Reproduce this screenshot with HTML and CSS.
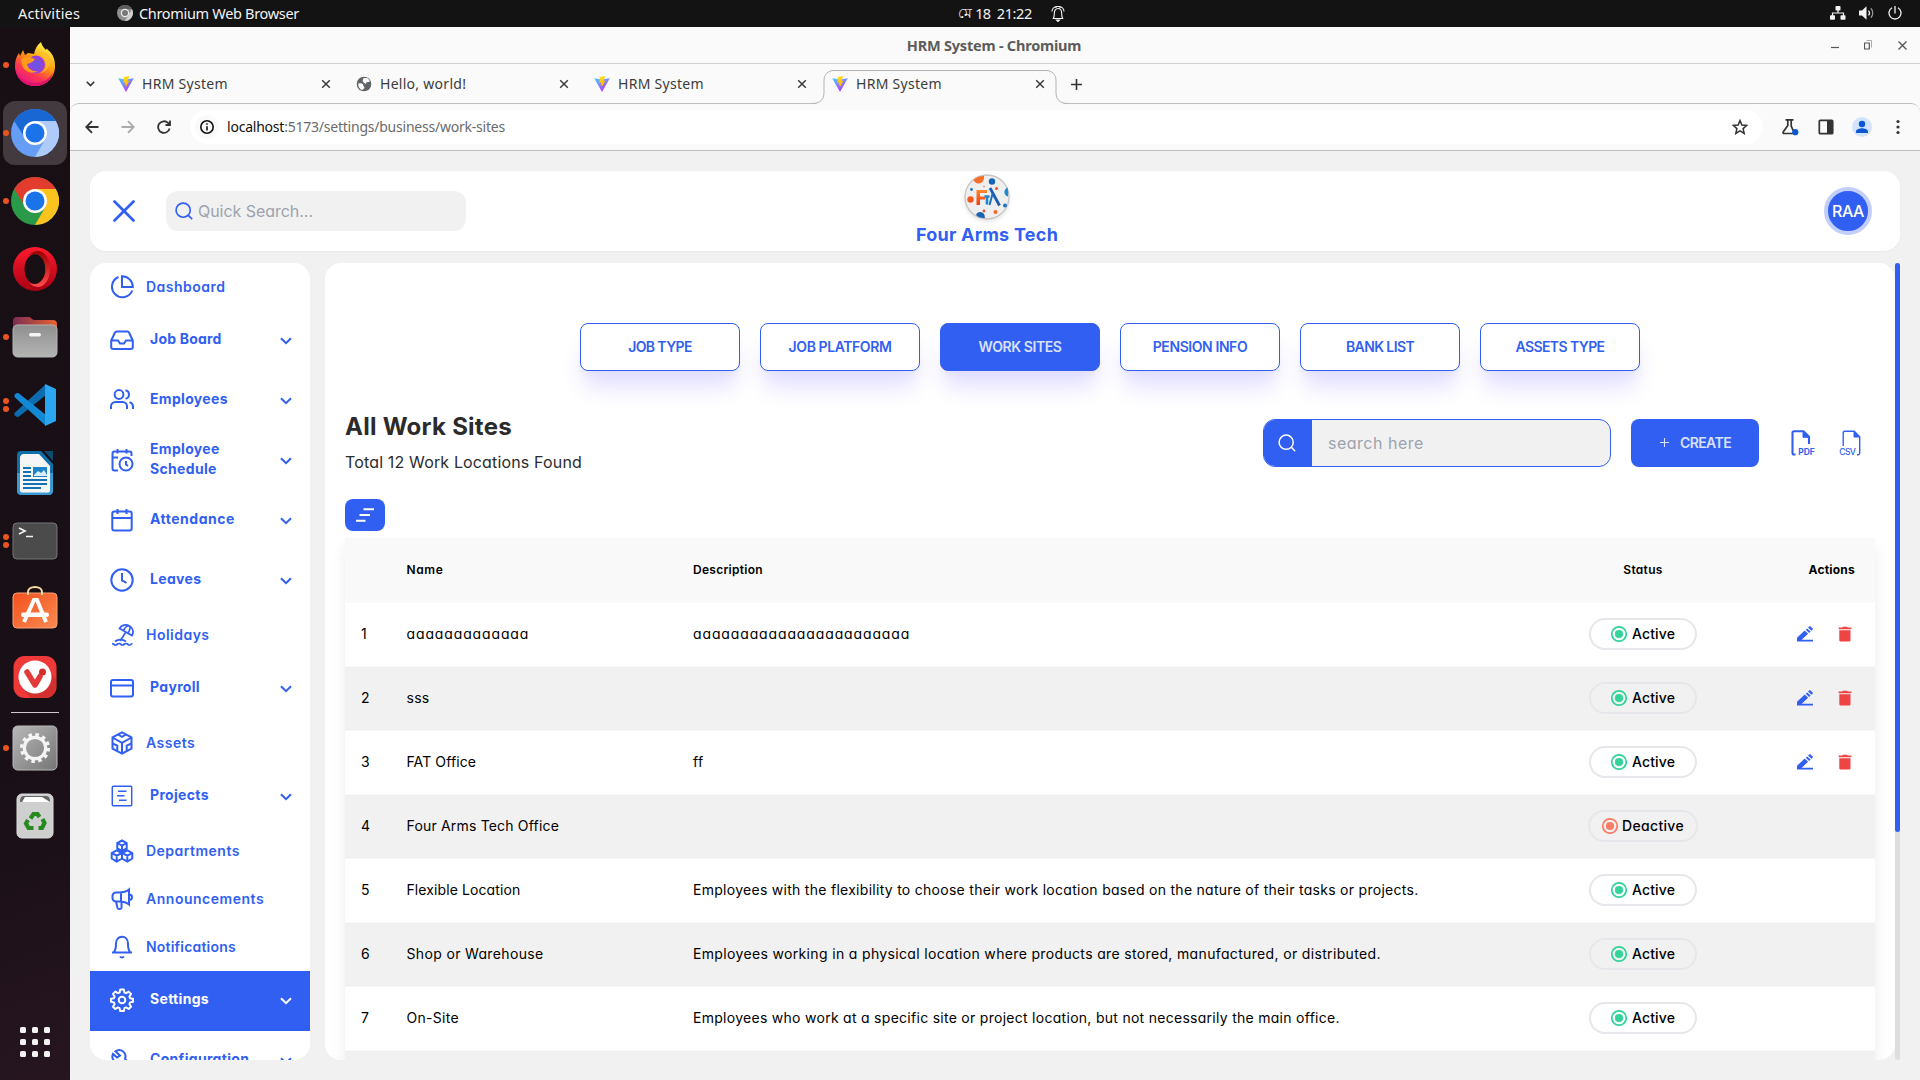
FILE: index.html
```html
<!DOCTYPE html>
<html lang="en">
<head>
<meta charset="utf-8">
<title>HRM System</title>
<link rel="stylesheet" href="styles.css">
</head>
<body>
<svg class="defs" aria-hidden="true">
  <defs>
    <linearGradient id="vA" x1="0" y1="0" x2="0.6" y2="1"><stop offset="0" stop-color="#41d1ff"/><stop offset="1" stop-color="#bd34fe"/></linearGradient>
    <linearGradient id="vB" x1="0.4" y1="0" x2="0.6" y2="1"><stop offset="0" stop-color="#ffdd20"/><stop offset="1" stop-color="#ffa800"/></linearGradient>
    <linearGradient id="ffBody" x1="0.8" y1="0.1" x2="0.3" y2="1"><stop offset="0" stop-color="#fff044"/><stop offset=".4" stop-color="#ff980e"/><stop offset=".7" stop-color="#ff3750"/><stop offset="1" stop-color="#e3158b"/></linearGradient>
    <radialGradient id="ffCore"><stop offset="0" stop-color="#5d5bea"/><stop offset="1" stop-color="#a13bd6"/></radialGradient>
    <linearGradient id="opA" x1="0" y1="0" x2="0" y2="1"><stop offset="0" stop-color="#ff1b2d"/><stop offset="1" stop-color="#a70014"/></linearGradient>
    <linearGradient id="opB" x1="0" y1="0" x2="0" y2="1"><stop offset="0" stop-color="#9c0000"/><stop offset="1" stop-color="#ff4b4b"/></linearGradient>
    <linearGradient id="gray" x1="0" y1="0" x2="1" y2="1"><stop offset="0" stop-color="#b8b8b8"/><stop offset="1" stop-color="#757575"/></linearGradient>
    <linearGradient id="files" x1="0" y1="0" x2="0" y2="1"><stop offset="0" stop-color="#8f8f8f"/><stop offset="1" stop-color="#b4b4b4"/></linearGradient>
    <linearGradient id="folder" x1="0" y1="0" x2="1" y2="0"><stop offset="0" stop-color="#7c2d55"/><stop offset="1" stop-color="#e9622f"/></linearGradient>
    <linearGradient id="ora" x1="0" y1="0" x2="1" y2="1"><stop offset="0" stop-color="#f4511e"/><stop offset="1" stop-color="#f98a50"/></linearGradient>
    <linearGradient id="logoF" x1="0" y1="0" x2="0" y2="1"><stop offset="0" stop-color="#ff8a2a"/><stop offset="1" stop-color="#f03a17"/></linearGradient>
    <symbol id="vite" viewBox="0 0 16 16"><path d="M.2 2.300 8 16 15.800 2.300 8 3.600z" fill="url(#vA)"/><path d="M11.200 0 5.800 1 5.300 7l1.800-.4-.5 2.800 1.400-.4-.4 2.600L11.600 4.500l-2 .4z" fill="url(#vB)"/></symbol>
    <symbol id="close" viewBox="0 0 10 10"><path d="m1.200 1.200 7.600 7.600M8.800 1.200 1.200 8.800" stroke="currentColor" stroke-width="1.500" fill="none"/></symbol>
    <symbol id="chev" viewBox="0 0 12 8"><path d="m1 1.200 5 5 5-5" fill="none" stroke="currentColor" stroke-width="2"/></symbol>
    <symbol id="search" viewBox="0 0 24 24"><circle cx="11" cy="11" r="8.500"/><path d="m17.200 17.200 4.600 4.600"/></symbol>
    <symbol id="radio" viewBox="0 0 16 16"><circle cx="8" cy="8" r="7.200" fill="none" stroke="currentColor" stroke-width="1.700"/><circle cx="8" cy="8" r="4.100" fill="currentColor"/></symbol>
    <symbol id="edit" viewBox="0 0 16 16"><path d="M0 14h16v1.500H0z"/><path d="M0 14.800v-3L7.700 4.600l3.400 3.200-6.400 6H16V15H0zM8.800 3.800l1.400-1.400 3.400 3.100-1.500 1.500zM11 1.600 12.200.5c.4-.4 1-.4 1.400 0l2 1.900c.4.400.4 1 0 1.400l-1.100 1z"/></symbol>
    <symbol id="bin" viewBox="0 0 14 16"><path d="M1.300 4.300h11.200V14c0 1-.7 1.600-1.600 1.600h-8c-.9 0-1.600-.6-1.600-1.600zM.6 1.600h3.500L5 .7h4l.9.9h3.500v1.600H.6z"/></symbol>
  </defs>
</svg>

<header class="topbar">
  <div class="top-left">
    <span class="activities">Activities</span>
    <svg width="16" height="16" viewBox="0 0 16 16"><circle cx="8" cy="8" r="8" fill="#8f8f8f"/><path d="M1 4a8 8 0 0 1 14 0H8z" fill="#5d5d5d"/><path d="M15 4.200A8 8 0 0 1 8 16l3.500-6z" fill="#d0d0d0"/><circle cx="8" cy="8" r="4.200" fill="#eee"/><circle cx="8" cy="8" r="3" fill="#777"/></svg>
    <span class="app-name">Chromium Web Browser</span>
  </div>
  <div class="clock"><span class="month">মে</span><span class="date">18</span><span class="time">21:22</span>
    <svg width="14" height="17" viewBox="0 0 14 17" fill="none" stroke="#f2f2f2" stroke-width="1.100"><path d="M2.300 13.500c1-1.300 1-3 1-5 0-3 1.300-5 3.700-5s3.700 2 3.700 5c0 2 0 3.700 1 5z"/><path d="M5 1.800C2.500 2.200 1.200 4 1 6.500M9 1.800c2.500.4 3.800 2.200 4 4.700M5 3V1.500h4V3"/><path d="M5.500 15h3L7 16.500z" fill="#f2f2f2"/></svg>
  </div>
  <div class="tray">
    <svg width="16" height="14" viewBox="0 0 16 14" fill="#f2f2f2"><rect x="5.500" y="0" width="5" height="4.500" rx=".8"/><rect x="0" y="9.300" width="5" height="4.500" rx=".8"/><rect x="10.500" y="9.300" width="5" height="4.500" rx=".8"/><path d="M8 4v3M2.500 10V7h11v3" fill="none" stroke="#f2f2f2" stroke-width="1.200"/></svg>
    <svg width="16" height="14" viewBox="0 0 16 14" fill="#f2f2f2"><path d="M0 4.500h3L7.500.3v13.400L3 9.500H0z"/><path d="M9.500 4.600c1.200 1.300 1.200 3.500 0 4.800" fill="none" stroke="#f2f2f2" stroke-width="1.200"/><path d="M11.800 2.300c2.600 2.400 2.600 7 0 9.400" fill="none" stroke="#999" stroke-width="1.200"/></svg>
    <svg width="14" height="14" viewBox="0 0 14 14" fill="none" stroke="#f2f2f2" stroke-width="1.300"><path d="M4 1.800a6 6 0 1 0 6 0M7 0v7.500"/></svg>
  </div>
</header>

<div class="desktop">
  <nav class="dock">
    <div class="dock-item"><i class="dot"></i>
      <svg class="lift" width="44" height="46" viewBox="0 0 44 46"><path d="M22 45C10 45 2 36 2 25c0-5 1-9 4-13l1 3 3-6 2 5 3-2c2 0 5 1 6 1 1-5 3-9 7-12 1 4 3 6 5 8 1-2 1-1 2 0 5 4 7 9 7 16 0 12-9 20-20 20z" fill="url(#ffBody)"/><path d="M3 30c3 7 10 12 19 12 8 0 15-4 18-11-2 9-9 14-18 14-10 0-17-6-19-15z" fill="#e0126c"/><circle cx="23" cy="23.500" r="9" fill="url(#ffCore)"/><path d="M8 18c4-3 9-2 14 0-2 3-4 4-8 5 1 5 6 8 11 7-7 4-14 0-16-6z" fill="#ff9a1b"/><path d="M24 12c5 1 9 5 9 11 0 5-3 8-7 9 10 0 14-12 8-19-3-3-7-3-10-1z" fill="#ffbd2e" opacity=".8"/></svg></div>
    <div class="dock-item"><span class="dock-active"></span><i class="dot"></i>
      <svg width="48" height="48" viewBox="0 0 48 48"><circle cx="24" cy="24" r="24" fill="#669df6"/><path d="M3.200 12a24 24 0 0 1 41.600 0H24l-10 17z" fill="#1967d2"/><path d="M44.800 12A24 24 0 0 1 24 48l10.400-18L24 12z" fill="#aecbfa"/><circle cx="24" cy="24" r="12" fill="#fff"/><circle cx="24" cy="24" r="9.500" fill="#1a73e8"/></svg></div>
    <div class="dock-item"><i class="dot"></i>
      <svg width="48" height="48" viewBox="0 0 48 48"><circle cx="24" cy="24" r="24" fill="#2a9a48"/><path d="M3.200 12a24 24 0 0 1 41.600 0H24l-10 17z" fill="#e33b2e"/><path d="M44.800 12A24 24 0 0 1 24 48l10.400-18L24 12z" fill="#fcc31e"/><circle cx="24" cy="24" r="12" fill="#fff"/><circle cx="24" cy="24" r="9.500" fill="#1a73e8"/></svg></div>
    <div class="dock-item">
      <svg width="44" height="44" viewBox="0 0 44 44"><path d="M22 0a22 22 0 1 0 0 44 22 22 0 1 0 0-44zm0 7c6 0 10.500 7 10.500 15S28 37 22 37s-10.500-7-10.500-15S16 7 22 7z" fill="url(#opA)" fill-rule="evenodd"/><path d="M16 8.500C19 4.500 24 3 29 5c4 2 8 8 8 17s-4 15-8 17c-5 2-10 .5-13-3.500 2 1.500 4 1.500 6 1.500 6 0 10.500-7 10.500-15S28 7 22 7c-2 0-4 0-6 1.500z" fill="url(#opB)"/></svg></div>
    <div class="dock-item"><i class="dot"></i>
      <svg width="46" height="42" viewBox="0 0 46 42"><path d="M1 13V5c0-2 1-4 4-4h12c2 0 3 3 5 3h19c3 0 4 2 4 4v5z" fill="url(#folder)"/><rect x="1" y="9" width="44" height="32" rx="4.500" fill="url(#files)" stroke="#b5b5b5"/><rect x="17" y="17" width="12" height="3.500" rx="1.700" fill="#f4f4f4"/></svg></div>
    <div class="dock-item"><i class="dot up"></i><i class="dot down"></i>
      <svg width="44" height="44" viewBox="0 0 44 44"><path d="M1.500 30 33 1v11L6 33.500c-1 .7-2 .6-3 0l-1.500-1.200z" fill="#0b6cb0"/><path d="M1.500 14 33 43V32L6 10.500c-1-.7-2-.6-3 0l-1.500 1.200z" fill="#1389d6"/><path d="M32 1v42l10-4.500c1-.5 1-1 1-1.500V7c0-.5 0-1-1-1.500z" fill="#2aa7f0"/></svg></div>
    <div class="dock-item">
      <svg width="38" height="46" viewBox="0 0 38 46"><path d="M5 1h20l12 13v27c0 2-1.500 4-4 4H5c-2.500 0-4-2-4-4V5c0-2.500 1.500-4 4-4z" fill="#0f6fa8"/><path d="M28 1h9v10z" fill="#0d4c72"/><path d="M1 23h36v18c0 2-1.500 4-4 4H5c-2.500 0-4-2-4-4z" fill="#3b9ad2"/><path d="M8 4h15l11 12v24c0 1.500-.7 2.500-2 2.500H6c-1.300 0-2-1-2-2.500V8c0-2.500 1.500-4 4-4z" fill="#f6f6f6"/><path d="M7 18h8M7 22h8M7 26h8M7 30h24M7 34h24M7 38h18" stroke="#1473b4" stroke-width="2"/><rect x="17" y="17" width="14" height="10" fill="#1c83c6"/><path d="m18 25 4-4 3 2 3-3 3 5v1H18z" fill="#d8eefc"/></svg></div>
    <div class="dock-item"><i class="dot up"></i><i class="dot down"></i>
      <svg width="46" height="38" viewBox="0 0 46 38"><rect x="1" y="1" width="44" height="36" rx="4" fill="#4b4b4b" stroke="#777"/><path d="m7 6 6 3-6 3M14 14.500h7" fill="none" stroke="#f2f2f2" stroke-width="1.700"/></svg></div>
    <div class="dock-item">
      <svg class="lift" width="46" height="44" viewBox="0 0 46 44"><rect x="1" y="7" width="44" height="35" rx="4" fill="url(#ora)" stroke="#f9a27a"/><path d="M16 9V6c0-3 3-5 7-5s7 2 7 5v3" fill="none" stroke="#fbd9a0" stroke-width="2"/><path d="M12 36 22 14h3l9 22" fill="none" stroke="#fff" stroke-width="4"/><rect x="9" y="26.500" width="28" height="4.500" rx="2.200" fill="#fff"/></svg></div>
    <div class="dock-item">
      <svg width="44" height="44" viewBox="0 0 44 44"><rect x=".5" y="1" width="43" height="42" rx="11" fill="#ef3939"/><path d="M34 14l9 10v8c0 6-5 11-11 11H18l-7-7z" fill="#d32f2f"/><circle cx="22" cy="22" r="16.500" fill="#fff"/><path d="M14 17l8 13 5-8.500" fill="none" stroke="#e23a3a" stroke-width="5.500" stroke-linecap="round" stroke-linejoin="round"/><circle cx="29.500" cy="17" r="3.500" fill="#d32f2f"/></svg></div>
    <div class="dock-sep"></div>
    <div class="dock-item"><i class="dot"></i>
      <svg width="46" height="46" viewBox="0 0 46 46"><rect x="1" y="1" width="44" height="44" rx="4.500" fill="url(#gray)" stroke="#bbb"/><circle cx="23" cy="23" r="13.300" fill="none" stroke="#f4f4f4" stroke-width="3.500" stroke-dasharray="3.500 3.463"/><circle cx="23" cy="23" r="10.700" fill="none" stroke="#f4f4f4" stroke-width="3.200"/></svg></div>
    <div class="dock-item">
      <svg width="38" height="46" viewBox="0 0 38 46"><rect x="1" y="1" width="36" height="44" rx="5" fill="#cfcfcf" stroke="#ddd"/><path d="M4 9c0-4 1-6 4-6h22c3 0 4 2 4 6z" fill="#666"/><path d="M6 9 9 4h17l8 5z" fill="#fff"/><g fill="none" stroke="#268a1f" stroke-width="4.200"><path d="m14.500 25.500 3-4.500h4l2 3M26.500 26l2 4-2.500 5h-3.500M17.500 35h-5L10 30.500l2-3.500"/></g></svg></div>
    <div class="dock-grid"><i></i><i></i><i></i><i></i><i></i><i></i><i></i><i></i><i></i></div>
  </nav>

  <div class="window">
    <div class="titlebar"><span></span><span class="win-title">HRM System - Chromium</span>
      <span class="win-btns">
        <svg width="8" height="12" viewBox="0 0 8 12"><path d="M0 8.500h8" stroke="#555" stroke-width="1.200"/></svg>
        <svg width="8" height="10" viewBox="0 0 8 10" fill="none"><path d="M2.500.5h5v7" stroke="#aaa"/><path d="M.5 3h4.800v6H.5z" stroke="#555" stroke-width="1.200"/></svg>
        <svg width="9" height="9" viewBox="0 0 9 9"><path d="m.5.500 8 8M8.500.500l-8 8" stroke="#555" stroke-width="1.300"/></svg>
      </span>
    </div>
    <div class="tabstrip">
      <svg class="tab-menu" width="9" height="6" viewBox="0 0 9 6"><path d="m.8.800 3.700 3.700L8.200.8" fill="none" stroke="#333" stroke-width="1.600"/></svg>
      <div class="tab"><svg width="16" height="16"><use href="#vite"/></svg><span class="tab-name">HRM System</span><svg class="x" width="10" height="10"><use href="#close"/></svg></div>
      <div class="tab"><svg width="16" height="16" viewBox="0 0 16 16"><circle cx="8" cy="8" r="7.300" fill="#5f6368"/><path d="M2.200 7.500c2.300-.6 5 0 5 1.600s1.300 1.400 1.300 2.600-1.500 1.500-2.300 2.300C3.700 13.300 2 11 2.200 7.500zM7.500 2h3.700c1.300.8 2.200 2 2.700 3.800l-3.300.4-1 1.800-2-1.500-1-1.600z" fill="#fafafa"/></svg><span class="tab-name">Hello, world!</span><svg class="x" width="10" height="10"><use href="#close"/></svg></div>
      <div class="tab"><svg width="16" height="16"><use href="#vite"/></svg><span class="tab-name">HRM System</span><svg class="x" width="10" height="10"><use href="#close"/></svg></div>
      <div class="tab">
        <svg class="tab-shape" width="256" height="34" viewBox="0 0 256 34"><path d="M0 34c8 0 12-4 12-11.500v-12c0-6 4-10 10-10h212c6 0 10 4 10 10v12c0 7.500 4 11.500 12 11.500z" fill="#fafafa"/><path d="M0 33.500c8 0 12-4 12-11v-12c0-6 4-10 10-10h212c6 0 10 4 10 10v12c0 7 4 11 12 11" fill="none" stroke="#b2b2b2"/></svg>
        <svg width="16" height="16"><use href="#vite"/></svg><span class="tab-name">HRM System</span><svg class="x" width="10" height="10"><use href="#close"/></svg></div>
      <svg class="tab-new" width="11" height="11" viewBox="0 0 11 11"><path d="M5.500 0v11M0 5.500h11" stroke="#333" stroke-width="1.600"/></svg>
    </div>
    <div class="toolbar">
      <svg width="14" height="14" viewBox="0 0 14 14" fill="none" stroke="#333" stroke-width="1.800"><path d="M13.500 7H1.500M7 1.200 1.300 7 7 12.800"/></svg>
      <svg class="fwd" width="14" height="14" viewBox="0 0 14 14" fill="none" stroke="#aaa" stroke-width="1.800"><path d="M.5 7h12M7 1.200 12.700 7 7 12.800"/></svg>
      <svg class="reload" width="14" height="14" viewBox="0 0 14 14" fill="none" stroke="#333" stroke-width="1.800"><path d="M12.600 8.500A5.800 5.800 0 1 1 11 2.900l1.600 1.600M13 .5v4.500H8.500"/></svg>
      <div class="omnibox">
        <span class="info"><svg width="14" height="14" viewBox="0 0 14 14" fill="none" stroke="#111" stroke-width="1.600"><circle cx="7" cy="7" r="6.200"/><path d="M7 6.200v4.200M7 3.300v1.500"/></svg></span>
        <span class="url"><b>localhost</b>:5173/settings/business/work-sites</span>
        <svg class="star" width="16" height="16" viewBox="0 0 16 16"><path d="m8 1.500 1.900 4.500 4.900.4-3.700 3.200 1.100 4.800L8 11.900l-4.200 2.500 1.100-4.800L1.200 6.400 6.100 6z" fill="none" stroke="#333" stroke-width="1.500"/></svg>
      </div>
      <svg class="flask" width="18" height="18" viewBox="0 0 18 18"><path d="M4.500 1.800h8M6.800 2v5.500L2.200 14c-.4.800 0 1.500.8 1.500h10.500L10.200 8V2" fill="none" stroke="#333" stroke-width="1.700"/><circle cx="14.300" cy="14.200" r="3.100" fill="#0b57d0"/></svg>
      <svg class="panel" width="16" height="16" viewBox="0 0 16 16"><rect x="1.300" y="1.300" width="13.400" height="13.400" rx="1" fill="none" stroke="#333" stroke-width="1.700"/><path d="M9 1h6v14H9z" fill="#333"/></svg>
      <svg class="profile" width="20" height="20" viewBox="0 0 20 20"><circle cx="10" cy="10" r="10" fill="#d3e3fd"/><circle cx="10" cy="7" r="3.200" fill="#0b57d0"/><path d="M4 16v-1.700c0-2 4-3 6-3s6 1 6 3V16z" fill="#0b57d0"/></svg>
      <svg class="more" width="4" height="16" viewBox="0 0 4 16" fill="#333"><circle cx="2" cy="2.500" r="1.600"/><circle cx="2" cy="8" r="1.600"/><circle cx="2" cy="13.500" r="1.600"/></svg>
    </div>

    <div class="page">
      <header class="head card">
        <div class="head-left">
          <svg class="menu-x" width="22" height="22" viewBox="0 0 22 22"><path d="m1.500 1.500 19 19M20.500 1.500l-19 19" stroke="#315ff2" stroke-width="2.700" stroke-linecap="round"/></svg>
          <div class="quick"><svg width="20" height="20" fill="none" stroke="#315ff2" stroke-width="2"><use href="#search"/></svg><span>Quick Search...</span></div>
        </div>
        <div class="brand">
          <svg class="logo" width="46" height="48" viewBox="0 0 46 48"><circle cx="23" cy="23" r="22" fill="#efefef" stroke="#c6c6c6" stroke-width="1.300"/><path d="M9.500 6C12 3 17 1.500 20 2c.5 3-1 7-5 7.500-2.500.3-4.500-1-5.500-3.500z" fill="#f4702b"/><circle cx="28" cy="7.500" r="3.200" fill="#1765b5"/><path d="M43.500 13.500c.8 3 .8 6 .5 9-4.500-1-5-7-.5-9z" fill="#1e8bd0"/><circle cx="6.500" cy="25.500" r="3.200" fill="#f25a22"/><circle cx="7.500" cy="15.500" r="1.400" fill="#1876c2"/><circle cx="32.500" cy="14.500" r="1.500" fill="#f0502a"/><circle cx="20" cy="12.500" r=".7" fill="#f0502a"/><circle cx="41" cy="31.500" r="2" fill="#1f75c1"/><path d="M12 41c1-4 7-4 8.500 0l.5 3c-4 .5-7-1-9-3z" fill="#1a62b3"/><circle cx="20" cy="37" r="1.400" fill="#f0502a"/><circle cx="31.500" cy="38" r="2" fill="#f4622a"/><path d="M12.500 31V16H23v3h-7v3.500h5v3h-5V31z" fill="url(#logoF)"/><path d="m26 14 9.500 17.500" stroke="#1c5ead" stroke-width="2.800"/><path d="M20.500 22.500h5M23 22v8.500" stroke="#1d86cd" stroke-width="2.600"/><path d="M28.500 20 25.500 31" stroke="#1f6fc0" stroke-width="2"/></svg>
          <span>Four Arms Tech</span>
        </div>
        <div class="avatar">RAA</div>
      </header>

      <div class="body">
        <aside class="side">
          <a class="item"><svg viewBox="0 0 24 24"><path d="M8.500 2A10.500 10.500 0 1 0 22.300 15.500"/><path d="M12 1.200V12h10.800C22.800 6 18 1.200 12 1.200z"/></svg><span>Dashboard</span></a>
          <a class="item group"><svg viewBox="0 0 24 24"><path d="M22.800 12.500H16l-2 3h-4l-2-3H1.200"/><path d="M5 4.500 1.200 12.500V19c0 1.200.8 2 2 2h17.600c1.200 0 2-.8 2-2v-6.500L19 4.500c-.4-.8-1-1-1.800-1H6.800c-.8 0-1.400.2-1.800 1z"/></svg><span class="jb">Job Board</span><svg class="chev" viewBox="0 0 12 8"><use href="#chev"/></svg></a>
          <a class="item group"><svg class="wide" viewBox="0 0 24 24"><path d="M17 21v-2.500a4.500 4.500 0 0 0-4.500-4.500h-7A4.500 4.500 0 0 0 1 18.500V21M23 21v-2.500c0-2.200-1.400-3.800-3.500-4.400M15.500 2.200a4.400 4.400 0 0 1 0 8.600"/><circle cx="9" cy="6.500" r="4.400"/></svg><span>Employees</span><svg class="chev" viewBox="0 0 12 8"><use href="#chev"/></svg></a>
          <a class="item group"><svg viewBox="0 0 24 24"><path d="M21.500 8V5.500c0-1.200-.8-2-2-2h-15c-1.200 0-2 .8-2 2v15c0 1.200.8 2 2 2H8M16.500 1v4.500M7.500 1v4.500M2.500 9.500H8"/><circle cx="16" cy="16" r="6.500"/><path d="M16 13v3.500l2 1.500"/></svg><span>Employee<br>Schedule</span><svg class="chev" viewBox="0 0 12 8"><use href="#chev"/></svg></a>
          <a class="item group"><svg viewBox="0 0 24 24"><rect x="2.300" y="3.500" width="19.400" height="19" rx="2"/><path d="M16.500 1v5M7.500 1v5M2.300 10h19.400"/></svg><span class="att">Attendance</span><svg class="chev" viewBox="0 0 12 8"><use href="#chev"/></svg></a>
          <a class="item group"><svg viewBox="0 0 24 24"><circle cx="12" cy="12" r="10.700"/><path d="M12 5v7.500l4.500 2.300"/></svg><span>Leaves</span><svg class="chev" viewBox="0 0 12 8"><use href="#chev"/></svg></a>
          <a class="item"><svg class="thin" viewBox="0 0 24 24"><path d="M9.500 5.500C11.500 1.800 16 1 19.500 3s4.500 6 2.500 9.500zM13.500 7.800C14.500 5 17 2.500 19.500 3M18 10.300c1.500-2.500 2.500-6 1.500-7.300M15.800 9l-5.500 9M5 18.500c3-2.500 8-2.500 11 0M2 20.500c1.700 0 1.700 1.500 3.500 1.500S7.200 20.500 9 20.500s1.700 1.500 3.500 1.500 1.700-1.500 3.500-1.500 1.700 1.500 3.500 1.500 1.500-1.500 3-1.500"/></svg><span>Holidays</span></a>
          <a class="item group"><svg class="wide" viewBox="0 0 24 24"><rect x="1" y="4" width="22" height="16.500" rx="2"/><path d="M1 9.500h22"/></svg><span>Payroll</span><svg class="chev" viewBox="0 0 12 8"><use href="#chev"/></svg></a>
          <a class="item"><svg viewBox="0 0 24 24"><path d="m12 1.300 9.500 5v11.400L12 22.700 2.500 17.700V6.300zM2.500 6.500 12 11.800l9.500-5.300M12 11.800v10.900"/><path d="m8 3.500 4 2.300 4-2.300M2.500 12.500l4.800 2.200v5M21.500 12.500l-4.800 2.200v5"/></svg><span>Assets</span></a>
          <a class="item group"><svg viewBox="0 0 24 24"><rect x="2.300" y="2.300" width="19.400" height="19.400" rx="1" stroke-width="1.500"/><path d="M8 7.200h8.500M7 11.800h7.500M9 16.200h7.500" stroke-width="1.400"/></svg><span>Projects</span><svg class="chev" viewBox="0 0 12 8"><use href="#chev"/></svg></a>
          <a class="item"><svg viewBox="0 0 24 24"><path d="m12 1.500 4.700 2.500v5.500L12 12 7.300 9.500V4zM7.300 4 12 6.700 16.700 4M12 6.700V12M6.700 11.300 12 14v5.500L6.700 22.500l-5-3V14zM1.700 14l5 2.700L12 14M6.700 16.700v5.800M17.300 11.300l5 2.700v5.500l-5 3-5.300-3V14zM12 14l5.300 2.700 5-2.700M17.300 16.700v5.800"/></svg><span>Departments</span></a>
          <a class="item"><svg viewBox="0 0 24 24"><path d="M19 2.500C16 5 13 5.500 9 5.500H6A3.500 3.500 0 0 0 2.500 9v2A3.500 3.500 0 0 0 6 14.500h3c4 0 7 .5 10 3zM11 5.500v9M19 7.500c4 0 4 5.500 0 5.500M6 14.500l1.500 6.500c.3 1 3.500 1.500 4 0v-6.500"/></svg><span class="ann">Announcements</span></a>
          <a class="item"><svg viewBox="0 0 24 24"><path d="M2 17.500h20M4 17c1.700-2 2-4 2-8.500C6 4.500 8.500 1.800 12 1.800s6 2.700 6 6.700c0 4.500.3 6.500 2 8.500M10 21.500c1 1.300 3 1.300 4 0"/></svg><span class="not">Notifications</span></a>
          <a class="item group current"><svg class="wide" viewBox="0 0 24 24"><circle cx="12" cy="12" r="3.300"/><path d="M10.200 1.500h3.600l.6 3 1.700.7 2.600-1.600 2.300 2.300-1.600 2.600.7 1.700 3 .6v2.900l-3 .7-.7 1.700 1.600 2.600-2.300 2.300-2.600-1.600-1.700.7-.6 3h-3.600l-.6-3-1.700-.7-2.600 1.600L3 18.700l1.600-2.600-.7-1.700-2.900-.7v-2.900l2.900-.6.7-1.700L3 5.900l2.300-2.300 2.600 1.600 1.700-.7z" stroke-linejoin="round"/></svg><span>Settings</span><svg class="chev" viewBox="0 0 12 8"><use href="#chev"/></svg></a>
          <a class="item group"><svg viewBox="0 0 24 24"><path d="M5.500 3.300a6.300 6.300 0 0 1 9.500 7.500l7 7.700-3.500 3.500-7.500-7.500a6.300 6.300 0 0 1-8-8.500L7 9.500 10 7.500z"/></svg><span>Configuration</span><svg class="chev" viewBox="0 0 12 8"><use href="#chev"/></svg></a>
        </aside>

        <main class="main">
          <nav class="tabs">
            <a class="pill">JOB TYPE</a><a class="pill loose">JOB PLATFORM</a><a class="pill on">WORK SITES</a><a class="pill loose">PENSION INFO</a><a class="pill">BANK LIST</a><a class="pill">ASSETS TYPE</a>
          </nav>
          <section class="bar">
            <div class="titles"><h1>All Work Sites</h1><p>Total 12 Work Locations Found</p></div>
            <div class="find"><span class="find-btn"><svg width="20" height="20" fill="none" stroke="#fff" stroke-width="1.800"><use href="#search"/></svg></span><span class="find-text">search here</span></div>
            <a class="create"><svg width="9" height="9" viewBox="0 0 9 9"><path d="M4.500 0v9M0 4.500h9" stroke="currentColor" stroke-width="1.100"/></svg>CREATE</a>
            <svg class="pdf" width="26" height="26" viewBox="0 0 26 26" fill="none" stroke="#315ff2" stroke-width="2.100"><path d="M5.500 24.500H4c-1 0-1.500-.6-1.500-1.500V3c0-1 .5-1.700 1.500-1.700h9.500l5.500 5.500V14"/><path d="M13 1.500v5.800h6z" fill="#315ff2" stroke-width="1"/><text x="8.300" y="25.300" class="ft" textLength="16.500">PDF</text></svg>
            <svg class="csv" width="26" height="26" viewBox="0 0 26 26" fill="none" stroke="#315ff2" stroke-width="1.400"><path d="M5.200 16V3c0-1 .5-1.700 1.500-1.700h9.500l5.500 5.500V23c0 1-.5 1.700-1.500 1.700H19"/><path d="M16 1.500v5.500h5.500z" fill="#315ff2" stroke-width="1"/><text x="1.300" y="25" class="ft thin" textLength="16.500">CSV</text></svg>
          </section>
          <a class="filter"><svg width="18" height="14" viewBox="0 0 18 14" stroke="#fff" stroke-width="1.900"><path d="M7.500 1.200H18M3.500 7h10.500M0 12.800h9.500"/></svg></a>
          <div class="table">
            <div class="row th"><span></span><span class="h-name">Name</span><span>Description</span><span class="c">Status</span><span class="r">Actions</span></div>
            <div class="row"><span>1</span><span class="aa">aaaaaaaaaaaaa</span><span class="aa">aaaaaaaaaaaaaaaaaaaaaaa</span><span class="c"><em class="tag"><svg width="16" height="16"><use href="#radio"/></svg>Active</em></span><span class="acts"><svg class="ed" width="16" height="16"><use href="#edit"/></svg><svg class="rm" width="14" height="16"><use href="#bin"/></svg></span></div>
            <div class="row alt"><span>2</span><span>sss</span><span></span><span class="c"><em class="tag"><svg width="16" height="16"><use href="#radio"/></svg>Active</em></span><span class="acts"><svg class="ed" width="16" height="16"><use href="#edit"/></svg><svg class="rm" width="14" height="16"><use href="#bin"/></svg></span></div>
            <div class="row"><span>3</span><span class="tight">FAT Office</span><span>ff</span><span class="c"><em class="tag"><svg width="16" height="16"><use href="#radio"/></svg>Active</em></span><span class="acts"><svg class="ed" width="16" height="16"><use href="#edit"/></svg><svg class="rm" width="14" height="16"><use href="#bin"/></svg></span></div>
            <div class="row alt"><span>4</span><span class="mid">Four Arms Tech Office</span><span></span><span class="c"><em class="tag off"><svg width="16" height="16"><use href="#radio"/></svg>Deactive</em></span><span></span></div>
            <div class="row"><span>5</span><span class="tight">Flexible Location</span><span>Employees with the flexibility to choose their work location based on the nature of their tasks or projects.</span><span class="c"><em class="tag"><svg width="16" height="16"><use href="#radio"/></svg>Active</em></span><span></span></div>
            <div class="row alt"><span>6</span><span class="wider">Shop or Warehouse</span><span class="wider">Employees working in a physical location where products are stored, manufactured, or distributed.</span><span class="c"><em class="tag"><svg width="16" height="16"><use href="#radio"/></svg>Active</em></span><span></span></div>
            <div class="row"><span>7</span><span>On-Site</span><span>Employees who work at a specific site or project location, but not necessarily the main office.</span><span class="c"><em class="tag"><svg width="16" height="16"><use href="#radio"/></svg>Active</em></span><span></span></div>
            <div class="row alt"></div>
          </div>
        </main>
        <div class="scroll"><div class="thumb"></div></div>
      </div>
    </div>
  </div>
</div>
</body>
</html>
```
FILE: styles.css
```css
* { box-sizing: border-box; }
body { margin: 0; width: 1920px; height: 1080px; overflow: hidden; display: flex; flex-direction: column; font-family: Inter, sans-serif; font-feature-settings: "cv11"; color: #000; }
svg { display: block; flex: none; }
.defs { position: absolute; width: 0; height: 0; }

/* desktop top bar */
.topbar { height: 27px; flex: none; background: #131313; color: #f2f2f2; display: grid; grid-template-columns: 1fr auto 1fr; align-items: center; font: 14.5px "Noto Sans", sans-serif; line-height: 20px; }
.top-left { display: flex; align-items: center; padding-left: 18px; padding-bottom: 1px; }
.activities { width: 99px; letter-spacing: .16px; }
.app-name { margin-left: 6px; letter-spacing: -.32px; }
.clock { display: flex; align-items: center; margin-left: 98px; padding-bottom: 1px; }
.month { width: 17px; font-size: 14px; }
.date { letter-spacing: -.8px; width: 21.500px; }
.time { letter-spacing: -.4px; width: 54px; }
.clock svg { margin-right: -5px; }
.tray { display: flex; align-items: center; justify-content: flex-end; gap: 13px; padding-right: 18px; padding-bottom: 1px; }

.desktop { flex: 1; display: flex; min-height: 0; }

/* dock */
.dock { width: 70px; flex: none; background: linear-gradient(160deg, #180f15 0%, #190f16 70%, #26151f 100%); display: flex; flex-direction: column; padding-top: 4px; }
.dock-item { position: relative; height: 68px; flex: none; display: flex; align-items: center; justify-content: center; }
.dock-item svg { position: relative; }
.dock-item .lift { margin-bottom: 3px; }
.dock-active { position: absolute; left: 3px; top: 2px; width: 64px; height: 64px; border-radius: 12px; background: #433a40; }
.dot { position: absolute; left: 3px; top: 31px; width: 6px; height: 6px; border-radius: 50%; background: #e95420; }
.dot.up { top: 27px; }
.dot.down { top: 35px; }
.dock-sep { height: 1px; margin: 1px 11px; background: #cfcacd; }
.dock-grid { margin: auto 0 23px 20px; display: grid; grid-template-columns: repeat(3, 6px); gap: 6px; }
.dock-grid i { height: 6px; border-radius: 1.500px; background: #f2f2f2; }

/* browser window */
.window { flex: 1; min-width: 0; display: flex; flex-direction: column; background: #fafafa; font-family: "Noto Sans", sans-serif; }
.titlebar { height: 37px; flex: none; border-bottom: 1px solid #d0d0d0; display: grid; grid-template-columns: 1fr auto 1fr; align-items: center; }
.win-title { font-weight: 700; font-size: 14.5px; letter-spacing: -.22px; color: #5c5c5c; margin-right: 2px; }
.win-btns { display: flex; justify-content: flex-end; align-items: center; gap: 25px; padding-right: 13px; }
.win-btns svg:last-child { margin-left: 1px; }
.tabstrip { height: 39px; flex: none; display: flex; align-items: center; padding-left: 16px; padding-top: 1px; }
.tab-menu { margin-right: 15px; }
.tab { position: relative; width: 238px; display: flex; align-items: center; padding-left: 8px; }
.tab > * { position: relative; }
.tab .tab-shape { position: absolute; left: -12px; top: -3px; }
.tab-name { flex: none; width: 179px; margin-left: 8px; font-size: 14px; line-height: 22px; letter-spacing: .28px; color: #3c3c3c; }
.x, .tab-new { color: #3c3c3c; }
.tab-new { margin-left: 9px; }
.toolbar { height: 48px; flex: none; border: 1px solid #bdbdbd; border-width: 1px 0; border-radius: 9px 9px 0 0; display: flex; align-items: center; padding-left: 15px; }
.fwd { margin-left: 22px; }
.reload { margin-left: 22px; }
.omnibox { width: 1573px; height: 34px; margin-left: 19px; border-radius: 17px; background: #fff; display: flex; align-items: center; padding-left: 5px; }
.info { width: 24px; height: 24px; border-radius: 50%; background: #fafafa; display: flex; align-items: center; justify-content: center; }
.url { margin-left: 8px; margin-bottom: 2px; font-size: 14px; letter-spacing: -.225px; color: #6b6b6b; }
.url b { font-weight: 400; color: #111; }
.star { margin-left: auto; margin-right: 15px; }
.flask { margin-left: 18px; }
.panel { margin-left: 19px; }
.profile { margin-left: 18px; }
.more { margin-left: 24px; }

/* application */
.page { flex: 1; min-height: 0; background: #f1f1f1; padding: 20px 20px; display: flex; flex-direction: column; gap: 12px; font-family: Inter, sans-serif; }
.head { height: 80px; flex: none; background: #fff; border-radius: 16px; box-shadow: 0 1px 2px rgba(0,0,0,.04); display: grid; grid-template-columns: 1fr auto 1fr; align-items: center; }
.head-left { display: flex; align-items: center; padding-left: 23px; }
.quick { width: 300px; height: 40px; margin-left: 31px; border-radius: 12px; background: #f1f1f1; display: flex; align-items: center; padding-left: 8px; gap: 4px; font-size: 16px; letter-spacing: -.04px; color: #9ca3af; }
.quick span { margin-bottom: 1px; }
.brand { display: flex; flex-direction: column; align-items: center; width: 160px; margin-left: -16px; font-size: 18px; line-height: 28px; font-weight: 700; letter-spacing: .25px; color: #315ff2; }
.logo { margin: 0 0 -1px; filter: drop-shadow(0 2px 2px rgba(0,0,0,.1)); }
.avatar { justify-self: end; margin-right: 28px; width: 48px; height: 48px; border-radius: 50%; border: 4px solid #c3cffa; background: #315ff2; color: #fff; display: flex; align-items: center; justify-content: center; font-size: 16px; font-weight: 500; letter-spacing: -.4px; }

.body { flex: 1; min-height: 0; display: flex; }
.side { width: 220px; height: 797px; flex: none; overflow: hidden; background: #fff; border-radius: 16px; display: flex; flex-direction: column; }
.item { height: 48px; flex: none; display: flex; align-items: center; padding: 0 18px 0 20px; color: #315ff2; font-size: 14px; font-weight: 600; letter-spacing: .48px; }
.item > svg:first-child { width: 24px; height: 24px; fill: none; stroke: currentColor; stroke-width: 2; }
.item > svg.thin:first-child { stroke-width: 1.700; }
.item span { margin-left: 12px; line-height: 20px; }
.item.group { height: 60px; font-weight: 700; letter-spacing: .32px; }
.item.group > svg:first-child { margin-bottom: 3px; }
.group span { margin-left: 16px; margin-top: -4px; }
.item .jb { letter-spacing: .2px; }
.item .att { letter-spacing: .52px; }
.item .ann { letter-spacing: .52px; }
.item .not { letter-spacing: .2px; }
.item svg.chev { width: 12px; height: 8px; margin-left: auto; }
.current { background: #315ff2; color: #fff; }

.main { width: 1570px; height: 797px; margin-left: 15px; overflow: hidden; background: #fff; border-radius: 16px; padding: 60px 20px 0; }
.tabs { display: flex; justify-content: center; gap: 20px; }
.pill { width: 160px; height: 48px; padding-bottom: 1px; border: 1px solid #315ff2; border-radius: 8px; background: #fff; color: #315ff2; display: flex; align-items: center; justify-content: center; font-size: 14px; font-weight: 600; letter-spacing: -.6px; box-shadow: 0 20px 25px -5px #e0dcff, 0 8px 10px -6px #e0dcff; }
.pill.loose { letter-spacing: -.42px; }
.pill.on { background: #315ff2; color: #d9e0fb; letter-spacing: -.42px; }
.bar { display: flex; align-items: center; height: 48px; margin-top: 48px; }
.titles { flex: 1; }
h1 { margin: -2px 0 0; font-size: 24px; line-height: 32px; font-weight: 700; letter-spacing: .26px; color: #2b2b2b; }
.titles p { margin: 7px 0 0; font-size: 16px; line-height: 24px; letter-spacing: .15px; color: #2b2b2b; }
.find { width: 348px; height: 48px; border: 1px solid #315ff2; border-radius: 12px; overflow: hidden; background: #f1f1f1; display: flex; align-items: center; font-size: 16px; letter-spacing: .5px; color: #9ca3af; }
.find-btn { width: 48px; height: 48px; padding-right: 2px; background: #315ff2; display: flex; align-items: center; justify-content: center; }
.find-text { margin-left: 16px; }
.create { width: 128px; height: 48px; padding: 0 0 1px 1px; margin-left: 20px; border-radius: 8px; background: #315ff2; color: #d9e0fb; display: flex; align-items: center; justify-content: center; gap: 11px; font-size: 14px; font-weight: 600; letter-spacing: -.58px; }
.pdf { margin-left: 31px; }
.csv { margin: 0 11px 0 22px; }
.ft { font: 700 8.500px Inter, sans-serif; fill: #315ff2; stroke: none; }
.ft.thin { font-weight: 500; }
.filter { width: 40px; height: 32px; margin-top: 32px; border-radius: 8px; background: #315ff2; display: flex; align-items: center; justify-content: center; }
.table { margin-top: 7px; box-shadow: 0 10px 15px rgba(0,0,0,.08); }
.row { height: 64px; display: grid; grid-template-columns: 61.5px 286.5px 850px 200px 132px; align-items: center; background: #fff; border-bottom: 1px solid #f8f8f8; padding-bottom: 2px; font-size: 14px; letter-spacing: .28px; white-space: nowrap; }
.row > span:first-child { padding-left: 16px; }
.row.th { height: 65px; background: #f9f9f9; font-size: 12px; font-weight: 600; border: 0; padding-bottom: 3px; }
.row .h-name { letter-spacing: .6px; }
.row.th .r { justify-self: end; padding-right: 20px; font-weight: 700; letter-spacing: .22px; }
.row.alt { background: #f1f1f1; }
.c { justify-self: center; }
.aa { letter-spacing: .87px; }
.tight { letter-spacing: .1px; }
.mid { letter-spacing: .18px; }
.wider { letter-spacing: .345px; }
.tag { height: 32px; width: 108px; border: 2px solid #e5e7eb; border-radius: 16px; display: flex; align-items: center; justify-content: center; gap: 5px; font-style: normal; font-weight: 500; letter-spacing: .15px; }
.tag svg { color: #34d399; }
.tag.off { width: 110px; letter-spacing: .33px; gap: 4px; }
.tag.off svg { color: #fb7c66; }
.acts { display: flex; align-items: center; justify-content: flex-end; gap: 25px; padding-right: 23px; }
.ed { fill: #315ff2; }
.rm { fill: #ef4444; }

.scroll { width: 5px; height: 797px; background: #dedede; border-radius: 0 0 3px 3px; }
.thumb { height: 569px; background: #315ff2; border-radius: 3px; }
```
